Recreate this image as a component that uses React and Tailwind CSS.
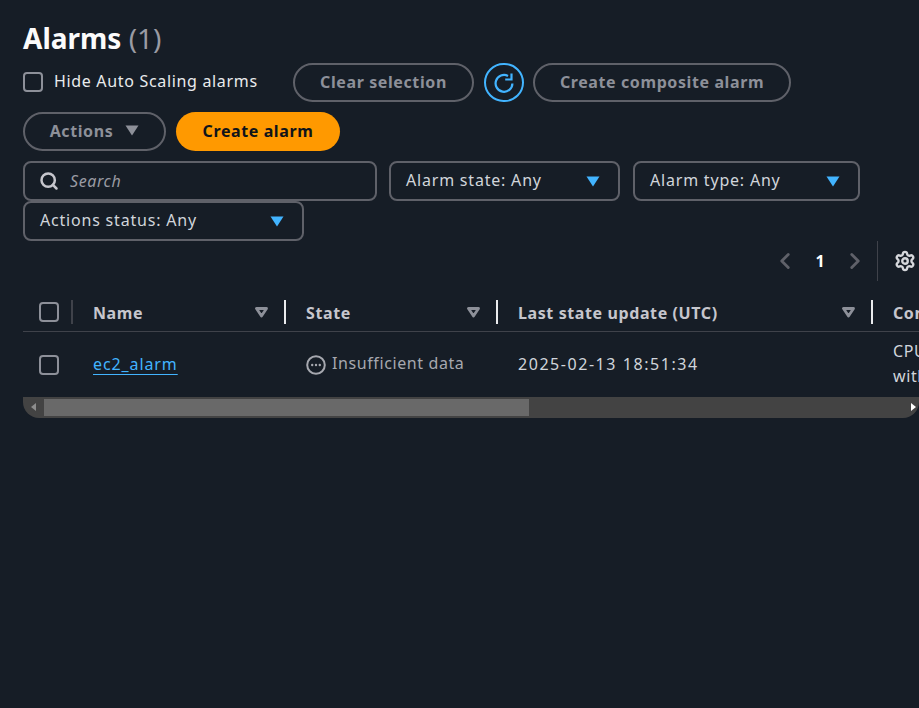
import React from 'react';
import { Settings, ChevronLeft, ChevronRight, Search } from 'lucide-react';

const Caret = ({ className }) => (
  <svg width="14" height="11" viewBox="0 0 14 11" className={className}>
    <path d="M0.5 0.5h13L7 10.5z" fill="currentColor" />
  </svg>
);

const SortIcon = () => (
  <svg width="13" height="11" viewBox="0 0 13 11" className="text-[#8d9099] shrink-0">
    <path d="M1.5 1.5h10L6.5 9z" fill="none" stroke="currentColor" strokeWidth="2.8" strokeLinejoin="round" />
  </svg>
);

const Checkbox = () => <span className="block w-5 h-5 shrink-0 rounded-[4px] border-2 border-[#8d9099]" />;

const PillButton = ({ children, className }) => (
  <button className={`h-[39px] pb-0.5 rounded-full border-2 border-[#5f6169] font-bold tracking-[0.6px] text-[#8d9099] flex items-center justify-center ${className}`}>
    {children}
  </button>
);

const SelectBox = ({ label, className }) => (
  <div className={`h-10 rounded-lg border-2 border-[#5f6169] flex items-center justify-between pl-[15px] pr-[18px] text-[#d1d5db] ${className}`}>
    <span className="tracking-[0.8px] -mt-0.5">{label}</span>
    <Caret className="text-[#42b4ff]" />
  </div>
);

const HeaderCell = ({ label, width }) => (
  <div className="flex items-center shrink-0 h-full" style={{ width }}>
    <div className="flex-1 flex items-center justify-between pl-5 pr-4 font-bold tracking-[0.6px] text-[#c6c6cd]">
      <span className="pt-0.5">{label}</span>
      <SortIcon />
    </div>
    <span className="block w-0.5 h-6 bg-[#e9ebed]" />
  </div>
);

export default function App() {
  return (
    <div className="min-h-[708px] bg-[#161d26] pl-[23px] pt-[19px] text-[16px] overflow-hidden font-['Noto_Sans','Open_Sans',sans-serif]">
      <h1 className="text-[28px] leading-[38px] font-bold text-[#fbfbfb]">
        Alarms <span className="font-normal text-[#9a9ba3]">(1)</span>
      </h1>

      <div className="flex items-center mt-1.5 h-[39px]">
        <label className="flex items-center w-[270px] -mt-0.5 text-[#e9ebed]">
          <Checkbox />
          <span className="ml-[11px] -mt-0.5 tracking-[0.67px]">Hide Auto Scaling alarms</span>
        </label>
        <PillButton className="w-[181px]">Clear selection</PillButton>
        <span className="ml-2.5 w-10 h-[39px] rounded-full border-2 border-[#42b4ff] text-[#42b4ff] flex items-center justify-center">
          <svg width="22" height="22" viewBox="0 0 22 22" fill="none" stroke="currentColor" strokeWidth="2.2">
            <path d="M15 4A8.4 8.4 0 1 0 19.4 11.5" />
            <path d="M18.5 1.5V7.5H12.2" />
          </svg>
        </span>
        <PillButton className="ml-[9px] w-[258px]">Create composite alarm</PillButton>
      </div>

      <div className="flex items-center gap-2.5 mt-2.5">
        <PillButton className="w-[143px] gap-3">
          Actions <Caret className="text-[#8d9099]" />
        </PillButton>
        <button className="h-[39px] pb-0.5 w-[164px] rounded-full bg-[#ff9900] font-bold tracking-[0.6px] text-[#0f141a]">Create alarm</button>
      </div>

      <div className="flex flex-wrap w-[850px] mt-2.5">
        <div className="w-[354px] h-10 rounded-lg border-2 border-[#5f6169] flex items-center pl-3.5 text-[#a0a2aa]">
          <Search size={20} strokeWidth={3} className="text-[#c6c6cd]" />
          <span className="ml-[11px] italic tracking-[0.6px] text-[#9a9ba3]">Search</span>
        </div>
        <SelectBox label="Alarm state: Any" className="ml-3 w-[231px]" />
        <SelectBox label="Alarm type: Any" className="ml-[13px] w-[227px]" />
        <SelectBox label="Actions status: Any" className="w-[281px]" />
      </div>

      <div className="flex items-center justify-end h-10 text-[#5f6169]">
        <ChevronLeft size={26} strokeWidth={2.6} />
        <span className="w-[44px] text-center font-bold text-white">1</span>
        <ChevronRight size={26} strokeWidth={2.6} />
        <span className="block ml-[9px] w-px h-10 bg-[#3f424a]" />
        <Settings size={22} strokeWidth={2.6} className="ml-[16px] mr-[3px] text-[#d5d7db]" />
      </div>

      <div className="mt-[12px] overflow-hidden">
        <div className="flex items-center h-[39px] border-b border-[#3f424a] w-[1300px]">
          <div className="w-[50px] h-full shrink-0 flex items-center pl-4">
            <Checkbox />
            <span className="block ml-3 w-0.5 h-6 bg-[#3f424a]" />
          </div>
          <HeaderCell label="Name" width={213} />
          <HeaderCell label="State" width={212} />
          <HeaderCell label="Last state update (UTC)" width={375} />
          <div className="pl-5 pt-0.5 font-bold tracking-[0.6px] text-[#c6c6cd]">Conditions</div>
        </div>

        <div className="flex items-center h-[65px] w-[1300px]">
          <div className="w-[50px] shrink-0 pl-4">
            <Checkbox />
          </div>
          <div className="w-[213px] shrink-0 pl-5 -mt-0.5">
            <a className="text-[#42b4ff] tracking-[0.9px] underline underline-offset-4">ec2_alarm</a>
          </div>
          <div className="w-[212px] shrink-0 pl-5 flex items-center text-[#a6a8af]">
            <svg width="20" height="20" viewBox="0 0 20 20" className="shrink-0">
              <circle cx="10" cy="10" r="8.8" fill="none" stroke="currentColor" strokeWidth="2" />
              <circle cx="6.2" cy="10" r="1.2" fill="currentColor" />
              <circle cx="10" cy="10" r="1.2" fill="currentColor" />
              <circle cx="13.8" cy="10" r="1.2" fill="currentColor" />
            </svg>
            <span className="ml-[6px] -mt-1 tracking-[0.6px] whitespace-nowrap">Insufficient data</span>
          </div>
          <div className="w-[375px] shrink-0 pl-5 -mt-0.5 text-[#d1d5db] tracking-[1.55px] whitespace-nowrap">2025-02-13 18:51:34</div>
          <div className="pl-5 w-[340px] leading-[25px] -mt-0.5 tracking-[0.6px] text-[#d1d5db]">CPUUtilization &gt; 80 for 1 datapoints within 5 minutes</div>
        </div>

        <div className="h-[21px] bg-[#434343] rounded-b-2xl flex items-center pl-[21px] relative">
          <span className="block w-[485px] h-[17px] bg-[#696969]" />
          <span className="absolute left-[8px] top-[6px] w-0 h-0 border-y-[4px] border-y-transparent border-r-[5px] border-r-[#8d8d8d]" />
          <span className="absolute right-[3px] top-[6px] w-0 h-0 border-y-[4px] border-y-transparent border-l-[5px] border-l-white" />
        </div>
      </div>
    </div>
  );
}
